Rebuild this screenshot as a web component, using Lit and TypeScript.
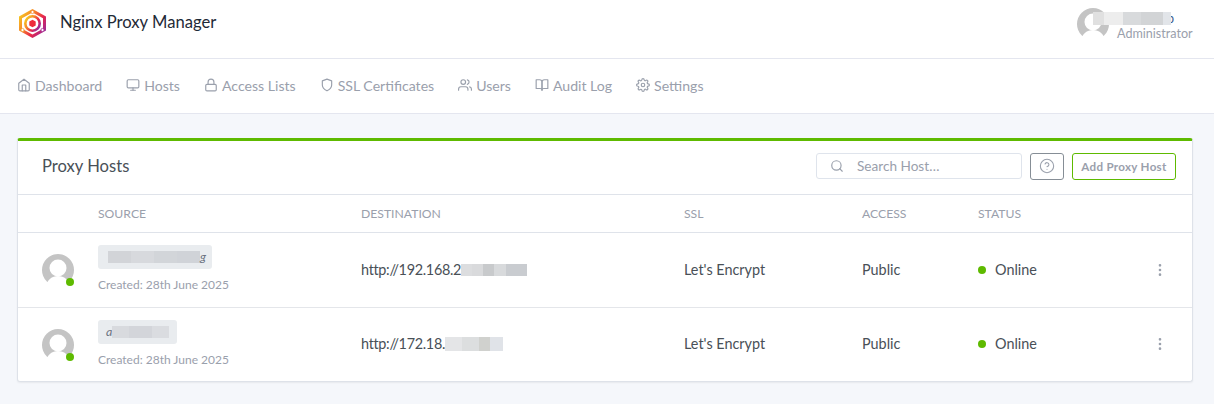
import { LitElement, html, css, svg } from "lit";
import { customElement } from "lit/decorators.js";

const icons: Record<string, any> = {
  home: svg`<path d="M3 9l9-7 9 7v11a2 2 0 0 1-2 2H5a2 2 0 0 1-2-2z"/><polyline points="9 22 9 12 15 12 15 22"/>`,
  monitor: svg`<rect x="2" y="3" width="20" height="14" rx="2" ry="2"/><line x1="8" y1="21" x2="16" y2="21"/><line x1="12" y1="17" x2="12" y2="21"/>`,
  lock: svg`<rect x="3" y="11" width="18" height="11" rx="2" ry="2"/><path d="M7 11V7a5 5 0 0 1 10 0v4"/>`,
  shield: svg`<path d="M12 22s8-4 8-10V5l-8-3-8 3v7c0 6 8 10 8 10z"/>`,
  users: svg`<path d="M17 21v-2a4 4 0 0 0-4-4H5a4 4 0 0 0-4 4v2"/><circle cx="9" cy="7" r="4"/><path d="M23 21v-2a4 4 0 0 0-3-3.87"/><path d="M16 3.13a4 4 0 0 1 0 7.75"/>`,
  book: svg`<path d="M2 3h6a4 4 0 0 1 4 4v14a3 3 0 0 0-3-3H2z"/><path d="M22 3h-6a4 4 0 0 0-4 4v14a3 3 0 0 1 3-3h7z"/>`,
  settings: svg`<circle cx="12" cy="12" r="3"/><path d="M19.4 15a1.65 1.65 0 0 0 .33 1.82l.06.06a2 2 0 0 1 0 2.83 2 2 0 0 1-2.83 0l-.06-.06a1.65 1.65 0 0 0-1.82-.33 1.65 1.65 0 0 0-1 1.51V21a2 2 0 0 1-2 2 2 2 0 0 1-2-2v-.09A1.65 1.65 0 0 0 9 19.4a1.65 1.65 0 0 0-1.82.33l-.06.06a2 2 0 0 1-2.83 0 2 2 0 0 1 0-2.83l.06-.06a1.65 1.65 0 0 0 .33-1.82 1.65 1.65 0 0 0-1.51-1H3a2 2 0 0 1-2-2 2 2 0 0 1 2-2h.09A1.65 1.65 0 0 0 4.6 9a1.65 1.65 0 0 0-.33-1.82l-.06-.06a2 2 0 0 1 0-2.83 2 2 0 0 1 2.83 0l.06.06a1.65 1.65 0 0 0 1.82.33H9a1.65 1.65 0 0 0 1-1.51V3a2 2 0 0 1 2-2 2 2 0 0 1 2 2v.09a1.65 1.65 0 0 0 1 1.51 1.65 1.65 0 0 0 1.82-.33l.06-.06a2 2 0 0 1 2.83 0 2 2 0 0 1 0 2.83l-.06.06a1.65 1.65 0 0 0-.33 1.82V9a1.65 1.65 0 0 0 1.51 1H21a2 2 0 0 1 2 2 2 2 0 0 1-2 2h-.09a1.65 1.65 0 0 0-1.51 1z"/>`,
  search: svg`<circle cx="11" cy="11" r="8"/><line x1="21" y1="21" x2="16.65" y2="16.65"/>`,
  help: svg`<circle cx="12" cy="12" r="10"/><path d="M9.09 9a3 3 0 0 1 5.83 1c0 2-3 3-3 3"/><line x1="12" y1="17" x2="12.01" y2="17"/>`,
  more: svg`<circle cx="12" cy="12" r="1"/><circle cx="12" cy="5" r="1"/><circle cx="12" cy="19" r="1"/>`,
};

const icon = (name: string, cls = "ic") =>
  html`<svg class=${cls} viewBox="0 0 24 24" fill="none" stroke="currentColor" stroke-width="2" stroke-linecap="round" stroke-linejoin="round">${icons[name]}</svg>`;

const avatar = () => html`<svg class="avatar-svg" viewBox="0 0 32 32">
  <circle cx="16" cy="16" r="16" fill="#c4c4c4"/>
  <circle cx="16" cy="14" r="8.5" fill="#fff"/>
  <path d="M4 32c1-6 6-10 12-10s11 4 12 10z" fill="#fff"/>
</svg>`;

const logo = () => html`<svg class="logo" viewBox="0 0 27 29">
  <defs>
    <linearGradient id="lg" x1="0" y1="0.15" x2="1" y2="0.85">
      <stop offset="0" stop-color="#f5d020"/>
      <stop offset="0.35" stop-color="#f7842a"/>
      <stop offset="0.65" stop-color="#e8264a"/>
      <stop offset="1" stop-color="#8e2aa8"/>
    </linearGradient>
  </defs>
  <polygon points="13.5,0 27,7.5 27,21.5 13.5,29 0,21.5 0,7.5" fill="url(#lg)"/>
  <polygon points="13.5,3.4 24,9.3 24,19.7 13.5,25.6 3,19.7 3,9.3" fill="#fff"/>
  <circle cx="13.5" cy="14.5" r="7.2" fill="none" stroke="url(#lg)" stroke-width="2.6"/>
  <polygon points="13.5,10.8 16.7,12.6 16.7,16.4 13.5,18.2 10.3,16.4 10.3,12.6" fill="#ee2b3b"/>
  <circle cx="13.5" cy="3" r="1.6" fill="#fff" stroke="#f7842a" stroke-width="0.8"/>
  <circle cx="3.5" cy="21" r="1.6" fill="#fff" stroke="#f0a02a" stroke-width="0.8"/>
  <circle cx="23.5" cy="21" r="1.6" fill="#fff" stroke="#a52a90" stroke-width="0.8"/>
</svg>`;

const nav = [
  ["home", "Dashboard"],
  ["monitor", "Hosts"],
  ["lock", "Access Lists"],
  ["shield", "SSL Certificates"],
  ["users", "Users"],
  ["book", "Audit Log"],
  ["settings", "Settings"],
];

const rows = [
  { tag: "tag-a", glyph: "g", blur: "blur-a", dest: "http://192.168.2", destBlur: "dest-a" },
  { tag: "tag-b", glyph: "a", blur: "blur-b", dest: "http://172.18.", destBlur: "dest-b" },
];

@customElement("app-root")
export class AppRoot extends LitElement {
  static styles = css`
    :host {
      display: block;
      width: 1214px;
      height: 404px;
      overflow: hidden;
      background: #f5f7fb;
      font-family: "Lato", "Liberation Sans", sans-serif;
      font-size: 14.4px;
      color: #495057;
    }
    .top {
      height: 59px;
      box-sizing: border-box;
      background: #fff;
      border-bottom: 1px solid #e4e6ef;
      display: flex;
      align-items: flex-start;
      justify-content: space-between;
      padding: 9px 21px 0 19px;
    }
    .brand { display: flex; align-items: flex-start; gap: 14px; height: 29px; }
    .logo { width: 27px; height: 29px; display: block; }
    .brand-name { font-size: 16.6px; line-height: 26px; color: #1f2a37; }
    .user { display: flex; gap: 8px; position: relative; width: 116px; margin-top: -1px; }
    .avatar-svg { width: 32px; height: 32px; display: block; flex: none; }
    .user-text { display: flex; flex-direction: column; padding-top: 18px; }
    .user-role { font-size: 12.6px; line-height: 15px; color: #9aa0ac; }
    .user-p {
      position: absolute;
      left: 90px;
      top: 3px;
      font-size: 12.6px;
      line-height: 15px;
      color: #3a5a8c;
    }
    .user-blur {
      position: absolute;
      left: 16px;
      top: 4px;
      width: 78px;
      height: 13px;
      background: linear-gradient(90deg, #e0e0e0 0 14%, #ededed 14% 38%, #d8dadc 38% 62%, #d2d4d6 62% 90%, #e2e5e9 90%);
    }
    .nav {
      height: 55px;
      box-sizing: border-box;
      background: #fff;
      border-bottom: 1px solid #e4e6ef;
      display: flex;
      align-items: center;
      gap: 24px;
      padding: 0 0 2px 17px;
      color: #9aa0ac;
    }
    .nav-item { display: flex; align-items: center; gap: 4px; font-size: 14.1px; }
    .ic { width: 14px; height: 14px; flex: none; display: block; }
    .content { padding: 24px 21px 0 17px; }
    .card {
      background: #fff;
      border: 1px solid #dee2e9;
      border-top: 3px solid #5eba00;
      border-radius: 3px;
      box-shadow: 0 1px 2px rgba(0, 0, 0, 0.06);
      height: 240px;
    }
    .card-head {
      height: 53px;
      display: flex;
      align-items: center;
      padding: 0 16px 3px 24px;
      box-sizing: content-box;
      border-bottom: 1px solid #dfe3ea;
      gap: 8px;
      height: 50px;
    }
    .card-title { flex: 1; font-size: 16.6px; color: #495057; }
    .search {
      width: 206px;
      height: 26px;
      box-sizing: border-box;
      border: 1px solid #dfe4ec;
      border-radius: 3px;
      display: flex;
      align-items: center;
      gap: 13px;
      padding-left: 13px;
      color: #9aa0ac;
      font-size: 13.6px;
    }
    .btn-help {
      width: 34px;
      height: 27px;
      box-sizing: border-box;
      border: 1px solid #868e96;
      border-radius: 3px;
      display: flex;
      align-items: center;
      justify-content: center;
      color: #9aa0ac;
    }
    .btn-help .ic { width: 16px; height: 16px; stroke-width: 1.6; }
    .btn-add {
      width: 104px;
      height: 27px;
      box-sizing: border-box;
      border: 1px solid #5eba00;
      border-radius: 3px;
      display: flex;
      align-items: center;
      justify-content: center;
      color: #9aa0ac;
      font-size: 11.6px;
      font-weight: 700;
      letter-spacing: 0.3px;
    }
    table {
      width: 100%;
      border-collapse: collapse;
      table-layout: fixed;
    }
    th {
      height: 37px;
      padding: 0 0 0 12px;
      box-sizing: border-box;
      text-align: left;
      font-weight: 400;
      font-size: 12.2px;
      color: #9aa0ac;
      border-bottom: 1px solid #dfe3ea;
      text-transform: uppercase;
    }
    td {
      height: 75px;
      padding: 0 0 0 12px;
      box-sizing: border-box;
      border-bottom: 1px solid #e4e6ea;
      font-size: 14.4px;
      color: #495057;
    }
    tr:first-child td.src { padding-bottom: 2px; }
    tr:last-child td { border-bottom: 0; height: 73px; }
    tr:last-child .av-wrap { margin-top: 2px; }
    .c1 { width: 68px; }
    .c2 { width: 263px; }
    .c3 { width: 323px; }
    .c4 { width: 178px; }
    .c5 { width: 116px; }
    .av-wrap { position: relative; width: 32px; height: 32px; margin-left: 12px; }
    .dot-on {
      position: absolute;
      right: 0;
      bottom: 0;
      width: 8px;
      height: 8px;
      border-radius: 50%;
      background: #5eba00;
    }
    .tag {
      height: 24px;
      background: #e9ecef;
      border-radius: 3px;
      display: flex;
      align-items: center;
      box-sizing: border-box;
      font-size: 12.4px;
      color: #6b7280;
      font-style: italic;
    }
    .tag-a { width: 114px; padding-left: 10px; }
    .tag-b { width: 79px; padding-left: 8px; }
    .blur { height: 12px; flex: none; }
    .blur-a {
      width: 92px;
      background: linear-gradient(90deg, #d2d4d8 0 25%, #d7d9dd 25% 50%, #d2d5d9 50% 75%, #d0d3d8 75%);
    }
    .blur-b {
      width: 57px;
      background: linear-gradient(90deg, #d8dade 0 30%, #d3d5da 30% 70%, #dadce0 70%);
    }
    .glyph { line-height: 12px; }
    .created { font-size: 12px; color: #9aa0ac; margin-top: 9px; line-height: 14px; }
    .dest { display: flex; align-items: center; letter-spacing: -0.3px; }
    .dest-blur { flex: none; }
    .dest-a {
      width: 66px;
      height: 12px;
      background: linear-gradient(90deg, #dcdddf 0 17%, #d9dadc 17% 34%, #c8cacc 34% 50%, #d8dadc 50% 68%, #c9ccd0 68%);
    }
    .dest-b {
      width: 58px;
      height: 14px;
      background: linear-gradient(90deg, #e4e5e7 0 30%, #dcdedf 30% 58%, #d0d1ce 58% 78%, #e0e3e8 78%);
    }
    .status-row { display: flex; align-items: center; justify-content: space-between; padding-right: 24px; }
    .status { display: flex; align-items: center; gap: 9px; }
    .dot { width: 8px; height: 8px; border-radius: 50%; background: #5eba00; flex: none; }
    .menu { color: #9aa0ac; display: block; }
    .menu .ic { width: 16px; height: 16px; }
  `;

  render() {
    return html`
      <div class="top">
        <div class="brand">${logo()}<span class="brand-name">Nginx Proxy Manager</span></div>
        <div class="user">
          ${avatar()}
          <div class="user-text"><span class="user-role">Administrator</span></div>
          <span class="user-p">p</span>
          <div class="user-blur"></div>
        </div>
      </div>
      <div class="nav">
        ${nav.map(([i, t]) => html`<div class="nav-item">${icon(i)}<span>${t}</span></div>`)}
      </div>
      <div class="content">
        <div class="card">
          <div class="card-head">
            <div class="card-title">Proxy Hosts</div>
            <div class="search">${icon("search")}<span>Search Host…</span></div>
            <div class="btn-help">${icon("help")}</div>
            <div class="btn-add">Add Proxy Host</div>
          </div>
          <table>
            <thead>
              <tr>
                <th class="c1"></th>
                <th class="c2">Source</th>
                <th class="c3">Destination</th>
                <th class="c4">SSL</th>
                <th class="c5">Access</th>
                <th>Status</th>
              </tr>
            </thead>
            <tbody>
              ${rows.map(
                (r, idx) => html`<tr>
                  <td>
                    <div class="av-wrap">${avatar()}<span class="dot-on"></span></div>
                  </td>
                  <td class="src">
                    <div class="tag ${r.tag}">
                      ${idx === 1 ? html`<span class="glyph">${r.glyph}</span>` : ""}
                      <div class="blur ${r.blur}"></div>
                      ${idx === 0 ? html`<span class="glyph">${r.glyph}</span>` : ""}
                    </div>
                    <div class="created">Created: 28th June 2025</div>
                  </td>
                  <td>
                    <div class="dest"><span>${r.dest}</span><div class="dest-blur ${r.destBlur}"></div></div>
                  </td>
                  <td>Let's Encrypt</td>
                  <td>Public</td>
                  <td>
                    <div class="status-row">
                      <div class="status"><span class="dot"></span><span>Online</span></div>
                      <span class="menu">${icon("more")}</span>
                    </div>
                  </td>
                </tr>`
              )}
            </tbody>
          </table>
        </div>
      </div>
    `;
  }
}
